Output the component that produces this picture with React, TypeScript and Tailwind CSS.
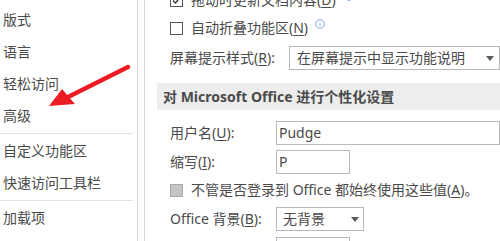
import React from "react";

const sideTop = ["版式", "语言", "轻松访问", "高级"];
const sideMid = ["自定义功能区", "快速访问工具栏"];

// 带下划线的快捷键字母
const K = ({ k }: { k: string }) => (
  <>
    (<span className="underline underline-offset-2">{k}</span>)
  </>
);

const Info = ({ className = "" }: { className?: string }) => (
  <svg width="10" height="10" viewBox="0 0 10 10" className={className}>
    <circle cx="5" cy="5" r="4.3" fill="none" stroke="#6fa4d8" strokeWidth="0.9" />
    <rect x="4.55" y="4.2" width="0.9" height="3.2" fill="#6fa4d8" />
    <rect x="4.55" y="2.5" width="0.9" height="0.9" fill="#6fa4d8" />
  </svg>
);

const Caret = () => (
  <svg width="8" height="5" viewBox="0 0 8 5">
    <path d="M0 0 L8 0 L4 5 Z" fill="#5a5a5a" />
  </svg>
);

const SideItem = ({ label }: { label: string }) => (
  <div className="h-[32px] flex items-center pl-[3px]">{label}</div>
);

export default function App() {
  return (
    <div className="relative w-[500px] h-[241px] overflow-hidden bg-white flex text-[14px] text-[#4a4a4a] font-['Noto_Sans','Noto_Sans_CJK_SC',sans-serif] leading-none">
      {/* 左侧导航 */}
      <div className="w-[138px] shrink-0 border-r border-[#d6d6d6] pt-[4px]">
        {sideTop.map((s) => (
          <SideItem key={s} label={s} />
        ))}
        <div className="h-px bg-[#e3e3e3] mr-[4px] my-[1px]" />
        {sideMid.map((s) => (
          <SideItem key={s} label={s} />
        ))}
        <div className="h-px bg-[#e3e3e3] mr-[4px] my-[1px]" />
        <SideItem label="加载项" />
      </div>

      <div className="w-[6px] shrink-0" />

      {/* 右侧内容 */}
      <div className="flex-1 border-l border-[#d6d6d6] min-w-0">
        <div className="flex flex-col mt-[-14px]">
          <div className="h-[28px] flex items-center pl-[25px]">
            <div className="w-[13px] h-[13px] border border-[#555] bg-white flex items-center justify-center">
              <svg width="9" height="9" viewBox="0 0 9 9">
                <path d="M1 4.5 L3.5 7 L8 1.5" fill="none" stroke="#333" strokeWidth="1.4" />
              </svg>
            </div>
            <span className="ml-[8px] whitespace-nowrap">
              拖动时更新文档内容<K k="D" />
            </span>
            <Info className="ml-[8px] -mt-[8px]" />
          </div>

          <div className="h-[28px] flex items-center pl-[25px]">
            <div className="w-[13px] h-[13px] border border-[#555] bg-white" />
            <span className="ml-[8px] whitespace-nowrap">
              自动折叠功能区<K k="N" />
            </span>
            <Info className="ml-[7px] -mt-[8px]" />
          </div>

          <div className="h-[32px] flex items-center pl-[25px]">
            <span className="w-[119px] shrink-0 whitespace-nowrap">
              屏幕提示样式<K k="R" />:
            </span>
            <div className="h-[24px] flex-1 border border-[#b9b9b9] flex items-center pl-[7px] pr-[5px] whitespace-nowrap">
              <span className="flex-1">在屏幕提示中显示功能说明</span>
              <Caret />
            </div>
          </div>

          <div className="mt-[9px] ml-[12px] h-[27px] bg-[#ededed] flex items-center pl-[6px] font-bold whitespace-nowrap">
            对 Microsoft Office 进行个性化设置
          </div>

          <div className="mt-[10px] h-[26px] flex items-center pl-[25px]">
            <span className="w-[106px] shrink-0 whitespace-nowrap">
              用户名<K k="U" />:
            </span>
            <div className="h-[24px] flex-1 border border-[#b9b9b9] flex items-center pl-[2px]">
              Pudge
            </div>
          </div>

          <div className="mt-[3px] h-[26px] flex items-center pl-[25px]">
            <span className="w-[106px] shrink-0 whitespace-nowrap">
              缩写<K k="I" />:
            </span>
            <div className="h-[24px] w-[74px] border border-[#b9b9b9] flex items-center pl-[2px]">
              P
            </div>
          </div>

          <div className="mt-[3px] h-[24px] flex items-center pl-[25px]">
            <div className="w-[13px] h-[13px] border border-[#a9a9a9] bg-[#c4c4c4]" />
            <span className="ml-[8px] whitespace-nowrap">
              不管是否登录到 Office 都始终使用这些值<K k="A" />。
            </span>
          </div>

          <div className="mt-[4px] h-[26px] flex items-center pl-[25px]">
            <span className="w-[106px] shrink-0 whitespace-nowrap">
              Office 背景<K k="B" />:
            </span>
            <div className="h-[24px] w-[88px] border border-[#b9b9b9] flex items-center pl-[6px] pr-[4px]">
              <span className="flex-1">无背景</span>
              <Caret />
            </div>
          </div>

          <div className="mt-[4px] h-[26px] flex items-center pl-[131px]">
            <div className="h-[24px] w-[74px] border border-[#b9b9b9]" />
          </div>
        </div>
      </div>

      {/* 红色标注箭头 */}
      <svg
        className="absolute left-0 top-0 pointer-events-none"
        width="500"
        height="241"
        viewBox="0 0 500 241"
      >
        <line x1="128" y1="67" x2="66" y2="98" stroke="#ec1c24" strokeWidth="4.5" strokeLinecap="round" />
        <path d="M49 106 L62 89 L75 104 Z" fill="#ec1c24" />
      </svg>
    </div>
  );
}
